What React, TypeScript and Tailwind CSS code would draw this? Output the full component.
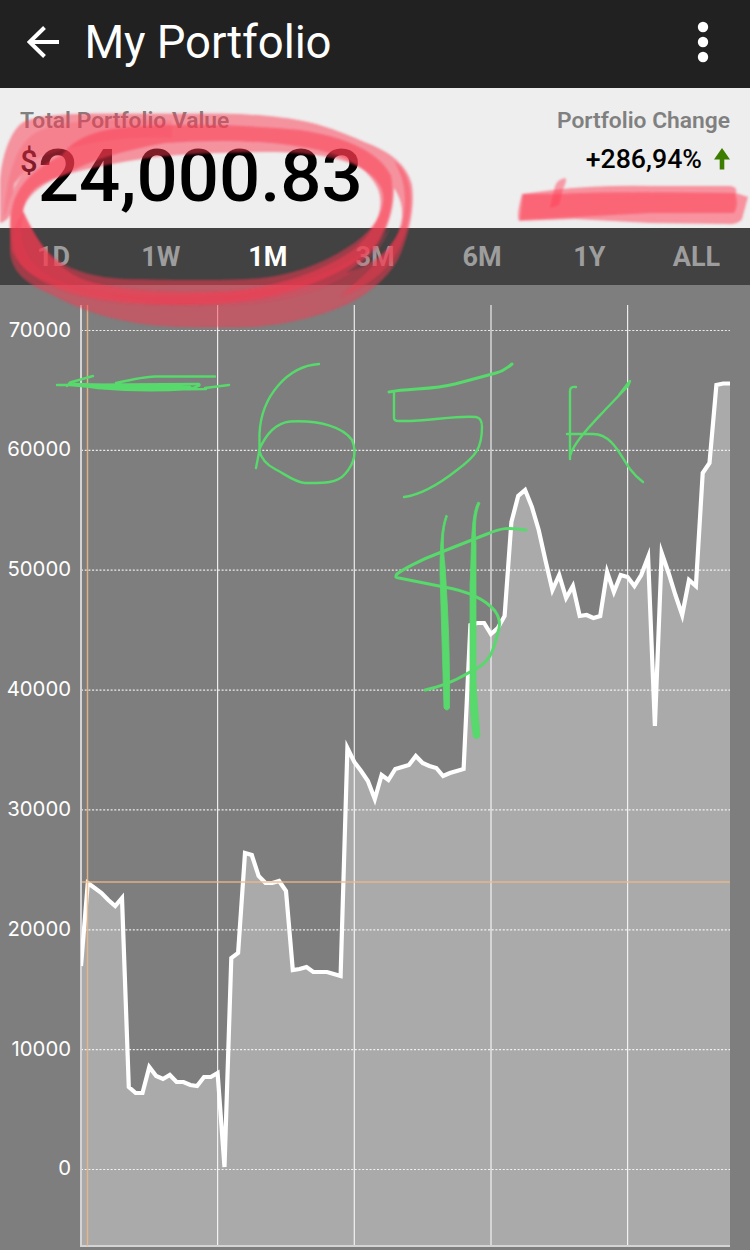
const ranges = ["1D", "1W", "1M", "3M", "6M", "1Y", "ALL"];
const axis = [70000, 60000, 50000, 40000, 30000, 20000, 10000, 0];
const verticals = [217.6, 354.3, 491, 627.6];

const series = [
  966, 883, 888, 893, 900, 906, 898, 1087, 1093, 1093, 1067, 1076, 1079, 1075, 1082, 1082, 1085, 1086, 1077, 1077,
  1073, 1167, 958, 953, 853, 855, 876, 883, 883, 881, 891, 970, 969, 967, 972, 972, 972, 974, 976, 748,
  762, 771, 781, 799, 775, 780, 769, 767, 765, 756, 763, 766, 768, 776, 773, 771, 769, 625, 623, 623,
  634, 628, 616, 522, 496, 490, 507, 530, 561, 590, 575, 598, 586, 616, 615, 618, 616, 572, 592, 575,
  577, 586, 575, 557, 726, 553, 573, 595, 615, 580, 586, 473, 463, 385, 383.5, 383.5,
];
const points = series.map((y, i) => `${(81 + i * 6.832).toFixed(1)},${y}`);
const linePath = "M" + points.join("L");
const areaPath = `${linePath}V1246H81Z`;

function Header() {
  return (
    <header className="flex h-[88px] items-center bg-[#212121] pl-[27px] pr-[41px] text-white">
      <svg className="mt-[-4px] h-8 w-8" viewBox="0 0 32 32" fill="none" stroke="currentColor" strokeWidth="4">
        <path d="M32 16H3M17.500 1.500L2.600 16L17.500 30.500" />
      </svg>
      <h1 className="mt-[-3px] ml-[25.5px] text-[45.5px] font-normal leading-none tracking-[-0.1px] whitespace-nowrap">My Portfolio</h1>
      <svg className="mt-[-4px] ml-auto h-[42px] w-3" viewBox="0 0 12 42" fill="currentColor">
        <circle cx="6" cy="6" r="5.2" />
        <circle cx="6" cy="21" r="5.2" />
        <circle cx="6" cy="36" r="5.2" />
      </svg>
    </header>
  );
}

function Summary() {
  return (
    <section className="flex h-[140px] justify-between bg-[#eeeeee] px-5 pt-5">
      <div>
        <div className="text-[22.8px] font-semibold leading-[26px] text-[#808080]">Total Portfolio Value</div>
        <div className="flex items-start text-black">
          <span className="mt-[13px] text-[31px] leading-[30px] font-medium">$</span>
          <span className="mt-[8px] text-[72.6px] leading-[70px] font-medium">24,000.83</span>
        </div>
      </div>
      <div className="text-right">
        <div className="text-[22.8px] font-semibold leading-[26px] text-[#808080]">Portfolio Change</div>
        <div className="mt-[10px] flex items-center justify-end text-[26.7px] leading-[30px] font-medium text-black">
          <span>+286,94%</span>
          <svg className="ml-3 h-[22px] w-4" viewBox="0 0 16 22" fill="#3c7d00">
            <path d="M8 0L16 11.5H10.3V21.5H5.7V11.5H0Z" />
          </svg>
        </div>
      </div>
    </section>
  );
}

function Tabs() {
  return (
    <nav className="grid h-[57px] grid-cols-7 items-center bg-[#424242] pt-[2px] text-center text-[27px] font-bold">
      {ranges.map((r) => (
        <span key={r} className={r === "1M" ? "text-white" : "text-[#9d9d9d]"}>
          {r}
        </span>
      ))}
    </nav>
  );
}

function Chart() {
  return (
    <section className="flex h-[965px] bg-[#7e7e7e]">
      <div className="flex w-[81px] flex-col gap-[89.85px] pt-[29.5px] pr-[10px] text-right font-['Inter',sans-serif] text-[20.3px] leading-[30px] text-white">
        {axis.map((v) => (
          <span key={v} className="block h-[30px]">
            {v}
          </span>
        ))}
      </div>
      <svg className="h-[965px] w-[669px] overflow-visible" viewBox="81 285 669 965" fill="none">
        <defs>
          <clipPath id="plot">
            <rect x="81" y="305" width="649" height="942" />
          </clipPath>
        </defs>
        <path d={areaPath} fill="#aaaaaa" />
        {axis.map((v, i) => (
          <path key={v} d={`M81 ${330.5 + i * 119.86}H730`} stroke="white" strokeOpacity=".85" strokeWidth="1.2" strokeDasharray="2 1.7" />
        ))}
        {verticals.map((x) => (
          <path key={x} d={`M${x} 305V1246`} stroke="white" strokeOpacity=".85" strokeWidth="1.2" />
        ))}
        <path d="M81 305V1246H730" stroke="#d4d4d4" strokeWidth="2" />
        <path d={linePath} stroke="white" strokeWidth="4.2" strokeMiterlimit="8" clipPath="url(#plot)" />
        <path d="M87.5 305V1246M82 882H730" stroke="#f0b887" strokeOpacity=".85" strokeWidth="1.5" />
      </svg>
    </section>
  );
}

function Annotations() {
  return (
    <svg className="pointer-events-none absolute inset-0 h-[1250px] w-[750px]" viewBox="0 0 750 1250" fill="none">
      <defs>
        <filter id="marker" x="-5%" y="-5%" width="110%" height="110%">
          <feGaussianBlur stdDeviation="1.1" />
        </filter>
      </defs>
      <g fill="#fc3850" fillOpacity=".5" fillRule="evenodd" filter="url(#marker)">
        <path d="M0 223V180C2 156 10 132 22 123C35 115 65 114 100 113.500H220C255 114 285 117 308 122C330 127 350 136 372 145C395 155 408 168 412 185C415 206 410 230 401 253C393 273 373 291 350 303C325 315 290 324 255 327C222 328 180 328 150 325C115 321 82 311 50 294C27 284 12 273 10 252V214C9 219 4 222 0 223ZM23 211C26 195 35 186 50 180C80 169 115 163 155 157C195 153 235 152 275 152C315 153 345 158 364 170C379 180 385 190 383 203C381 220 365 238 343 250C322 264 290 275 262 278C220 281 165 280 126 279C98 278 70 271 55 258C42 248 32 230 23 211ZM394 188C402 200 405 214 399 230C392 249 374 264 346 273C366 260 378 248 386 229C392 214 394 202 394 188ZM14 184L22 174C18 182 14 187 13 194Z" />
        <path d="M12 250C9 229 10 205 17 194C25 177 42 165 62 155C75 137 100 129 130 127C185 123 245 125 300 130C340 136 379 150 391 176C395 198 390 222 378 241C359 266 318 286 263 298C210 308 140 306 100 300C62 293 22 278 12 250ZM23 211C26 196 42 184 60 177C90 160 125 150 165 143C218 139 279 140 326 152C354 159 371 173 378 189C386 210 374 232 353 250C322 272 273 288 226 291C170 294 113 291 80 278C51 264 36 240 23 211Z" />
        <path d="M4 218C6 180 14 147 35 133C60 119 120 117 172 121V138C120 135 65 146 28 162L18 182L10 200Z" fillOpacity=".2" />
        <path d="M24 213C16 242 27 268 62 282C92 295 155 299 220 294C295 288 351 270 390 228C374 278 299 304 220 305C146 308 70 292 30 274C10 260 8 225 24 213Z" fillOpacity=".22" />
        <path d="M394 161C412 174 414 198 407 228C397 264 374 285 340 297C369 270 390 253 402 225C407 199 406 181 394 161Z" fillOpacity=".4" />
      </g>
      <g fill="#ff3850" fillOpacity=".5" filter="url(#marker)">
        <path d="M522 194L553 190Q600 185 650 186H730Q738 187 736 193L748 197L742 219Q738 225 727 224L650 223L575 219L519 221Q516 216 522 194Z" />
        <path d="M523 194L558 194Q600 191 735 193Q739 205 734 213L650 213L520 220Z" />
        <path d="M555 186Q558 179 565 178Q568 179 563 189L559 205L550 208Z" fillOpacity=".45" />
      </g>
      <g stroke="#57d96b" strokeWidth="2.4" strokeLinecap="round" strokeLinejoin="round">
        <path d="M93 376L70 382.500L67 386M57 385L199 384Q202 386 188 389Q145 392 98 388L70 384M116 383C134 379 146 376.500 155 376.500H215M70 385C110 389 155 390 206 389M205 388L229 385M74 384L190 387M90 386L196 388" />
        <path d="M319 364C288 366 261 396 259.500 434V450L256 468M259 450C266 434 276 423 290 421.500C320 420 343 427 352 440C357 452 354 464 345 474C337 484 320 483 305 483C294 482 285 474 275 469C265 464 261 458 259 450" />
        <path d="M389 392C410 388 432 390 455 384L496 373Q504 371 512 364" strokeWidth="3" />
        <path d="M394 392V418Q394 421 399 421C426 422 455 415 476 417Q482 418 482 427C482 448 476 456 457 470C438 485 419 495 404 497" />
        <path d="M576 387Q570 386 570 391V459M630 381L628 386L605 410C592 424 574 442 570 456M567 434H593C612 434 620 455 630 469Q636 477 643 482M629 382L619 395" />
        <path d="M526 530C508 527 501 528 487 534L439 553C420 560 402 570 397 574Q394 578 399 578L444 587C467 591 485 599 495 611Q502 621 498 632C493 653 490 663 470 672C450 684 437 687 425 690" strokeWidth="3" />
      </g>
      <g fill="#57d96b" stroke="#57d96b" strokeWidth=".8">
        <path d="M446 515L447.500 516C442 531 443 548 445 566C448 611 450 655 449.500 708Q447 712 444 708L440 574C440 548 441 528 446 515Z" />
        <path d="M478 502L480 503C475 514 475 527 476 545V681C477 703 479 723 480 736Q477 741 473.500 737C470 715 470 697 470 674V585C472 554 470 516 478 502Z" />
      </g>
    </svg>
  );
}

export default function App() {
  return (
    <main className="relative h-[1250px] w-[750px] overflow-hidden font-['Roboto',sans-serif]">
      <Header />
      <Summary />
      <Tabs />
      <Chart />
      <Annotations />
    </main>
  );
}
